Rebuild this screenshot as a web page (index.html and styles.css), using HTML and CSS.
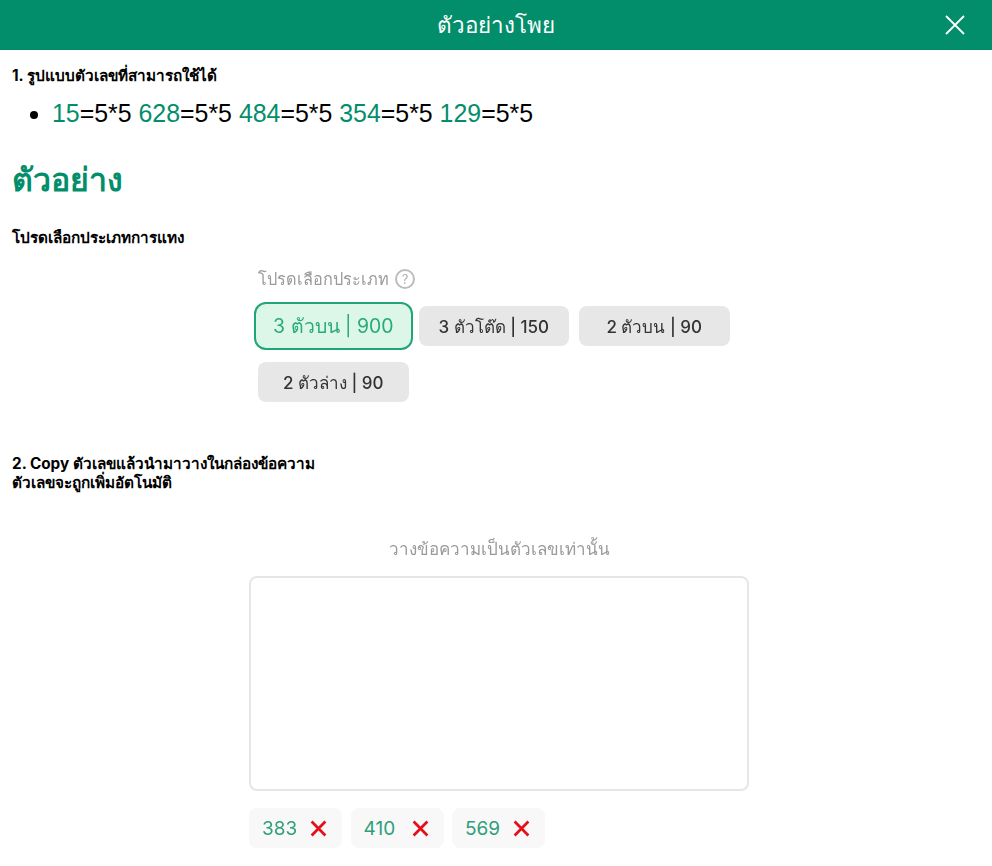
FILE: index.html
```html
<!DOCTYPE html>
<html lang="th">
<head>
    <meta charset="UTF-8">
    <meta name="viewport" content="width=device-width, initial-scale=1.0">
    <title>ตัวอย่างโพย</title>
    <link rel="stylesheet" href="styles.css">
</head>
<body>
    <header class="modal-header">
        <h2>ตัวอย่างโพย</h2>
        <button class="close-button" aria-label="close">
            <svg viewBox="0 0 20 20" width="20" height="20"><path d="M1 1 19 19M19 1 1 19"/></svg>
        </button>
    </header>

    <main class="modal-body">
        <p class="step-title">1. รูปแบบตัวเลขที่สามารถใช้ได้</p>
        <ul class="format-list">
            <li><span class="num">15</span>=5*5 <span class="num">628</span>=5*5 <span class="num">484</span>=5*5 <span class="num">354</span>=5*5 <span class="num">129</span>=5*5</li>
        </ul>

        <h1 class="example-title">ตัวอย่าง</h1>

        <p class="step-title choose-title">โปรดเลือกประเภทการแทง</p>

        <div class="type-picker">
            <div class="type-label">
                โปรดเลือกประเภท
                <span class="help-icon">?</span>
            </div>
            <div class="type-list">
                <div class="type-button selected">3 ตัวบน | 900</div>
                <div class="type-button">3 ตัวโต๊ด | 150</div>
                <div class="type-button">2 ตัวบน | 90</div>
                <div class="type-button">2 ตัวล่าง | 90</div>
            </div>
        </div>

        <p class="step-title copy-title">2. Copy ตัวเลขแล้วนำมาวางในกล่องข้อความ<br>ตัวเลขจะถูกเพิ่มอัตโนมัติ</p>

        <div class="paste-box">
            <div class="paste-label">วางข้อความเป็นตัวเลขเท่านั้น</div>
            <div class="paste-area"></div>
            <div class="chip-list">
                <div class="chip">383 <svg viewBox="0 0 16 16" width="17" height="17"><path d="M1.5 1.5 14.5 14.5M14.5 1.5 1.5 14.5"/></svg></div>
                <div class="chip">410 <svg viewBox="0 0 16 16" width="17" height="17"><path d="M1.5 1.5 14.5 14.5M14.5 1.5 1.5 14.5"/></svg></div>
                <div class="chip">569 <svg viewBox="0 0 16 16" width="17" height="17"><path d="M1.5 1.5 14.5 14.5M14.5 1.5 1.5 14.5"/></svg></div>
            </div>
        </div>
    </main>
</body>
</html>
```

FILE: styles.css
```css
:root {
    --primary-color: #038e6b;
    --text-color: #000000;
    --muted-color: #9a9a9a;
}

* {
    margin: 0;
    padding: 0;
    box-sizing: border-box;
}

html, body {
    height: 866px;
    overflow: hidden;
}

body {
    font-family: 'Inter', 'Noto Sans', 'Noto Sans CJK SC', sans-serif;
    color: var(--text-color);
    background-color: #ffffff;
}

.modal-header {
    position: relative;
    height: 50px;
    display: flex;
    align-items: center;
    justify-content: center;
    background-color: var(--primary-color);
    color: #ffffff;
}

.modal-header h2 {
    font-size: 22.4px;
    font-weight: 500;
}

.close-button {
    position: absolute;
    top: 15px;
    right: 27px;
    width: 20px;
    height: 20px;
    background: none;
    border: none;
}

.close-button svg {
    display: block;
    fill: none;
    stroke: #ffffff;
    stroke-width: 1.8;
}

.modal-body {
    padding: 16px 12px 0;
}

.step-title {
    font-size: 15.3px;
    font-weight: 700;
    line-height: 20px;
}

.format-list {
    margin-top: 11px;
    padding-left: 40px;
    font-family: 'Liberation Sans', sans-serif;
    font-size: 24.9px;
    line-height: 32px;
}

.num {
    color: var(--primary-color);
}

.example-title {
    margin-top: 29px;
    font-size: 32px;
    font-weight: 700;
    line-height: 44px;
    color: var(--primary-color);
}

.choose-title {
    margin-top: 26px;
}

/* the two pictures in the help text are a bit soft */
.type-picker {
    margin: 19px 0 0 246px;
    width: 500px;
    filter: blur(0.4px);
}

.type-label {
    display: flex;
    align-items: center;
    gap: 6px;
    height: 24px;
    font-size: 16.3px;
    color: var(--muted-color);
}

.help-icon {
    width: 20px;
    height: 20px;
    border: 2px solid #bdbdbd;
    border-radius: 50%;
    font-size: 13px;
    line-height: 16px;
    text-align: center;
    color: #b0b0b0;
}

.type-list {
    display: flex;
    flex-wrap: wrap;
    gap: 16px 10px;
    margin-top: 15px;
}

.type-button {
    width: 150.5px;
    height: 40px;
    display: flex;
    align-items: center;
    justify-content: center;
    border-radius: 8px;
    background-color: #e7e7e7;
    font-size: 17px;
    font-weight: 500;
    color: #333333;
}

.type-button.selected {
    background-color: #dcf7e7;
    box-shadow: 0 0 0 2px #dcf7e7, 0 0 0 4px #1fa578;
    color: #2aa97c;
    font-size: 19.4px;
    font-weight: 400;
}

.copy-title {
    margin-top: 52px;
    line-height: 19px;
}

.paste-box {
    margin: 45px 0 0 237px;
    width: 500px;
    filter: blur(0.4px);
}

.paste-label {
    font-size: 17px;
    line-height: 24px;
    text-align: center;
    color: var(--muted-color);
}

.paste-area {
    height: 215px;
    margin-top: 15px;
    border: 2px solid #e6e6e6;
    border-radius: 8px;
}

.chip-list {
    display: flex;
    gap: 8.5px;
    margin-top: 17px;
}

.chip {
    width: 93px;
    height: 40px;
    display: flex;
    align-items: center;
    justify-content: space-between;
    padding: 0 15px 0 13px;
    border-radius: 8px;
    background-color: #f8f8f8;
    font-size: 19px;
    color: #2f9e7b;
}

.chip svg {
    fill: none;
    stroke: #e3101c;
    stroke-width: 2.6;
}
```
